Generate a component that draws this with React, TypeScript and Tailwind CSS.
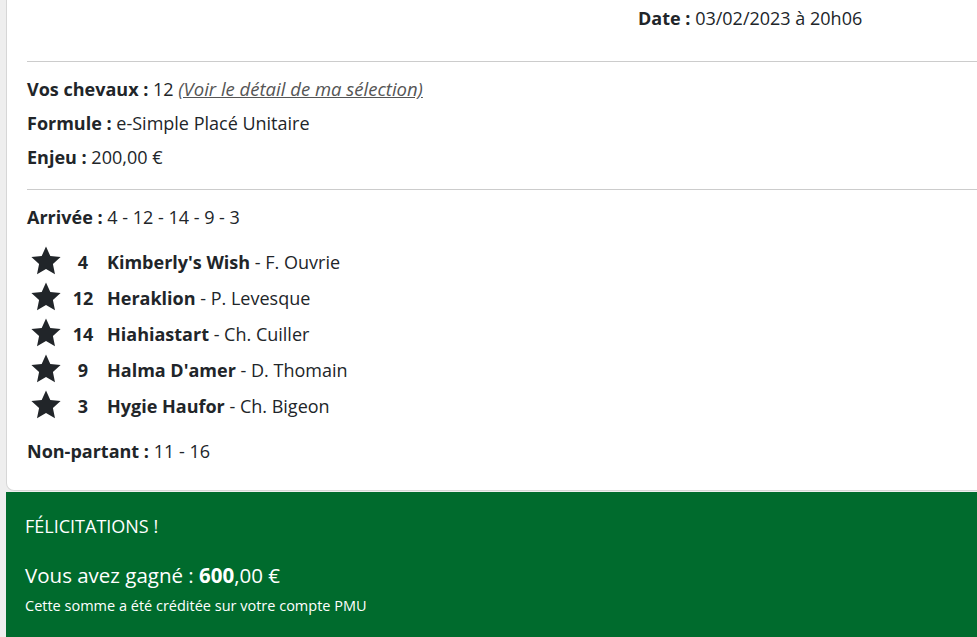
import React from "react";

const horses = [
  { n: "4", name: "Kimberly's Wish", jockey: "F. Ouvrie" },
  { n: "12", name: "Heraklion", jockey: "P. Levesque" },
  { n: "14", name: "Hiahiastart", jockey: "Ch. Cuiller" },
  { n: "9", name: "Halma D'amer", jockey: "D. Thomain" },
  { n: "3", name: "Hygie Haufor", jockey: "Ch. Bigeon" },
];

function Star() {
  return (
    <svg width="30" height="29" viewBox="0.5 0.5 23 22" className="block">
      <path
        d="M12 0.8l3.3 7.2 7.9 0.9-5.9 5.3 1.6 7.8L12 18l-6.9 4 1.6-7.8L0.8 8.9l7.9-0.9z"
        fill="#212529"
      />
    </svg>
  );
}

export default function App() {
  return (
    <div
      className="w-[977px] h-[637px] overflow-hidden bg-[#eeeeee] pl-[6px] text-[#212529]"
      style={{ fontFamily: "'Open Sans', 'Noto Sans', sans-serif" }}
    >
      <div className="w-[1100px] bg-white border border-[#d6d6d6] border-t-0 rounded-bl-[8px] px-5 text-[18px] leading-[24px]">
        <div className="grid grid-cols-[611px_1fr] pt-[6px] h-[61px]">
          <div />
          <div>
            <span className="font-bold">Date :</span> 03/02/2023 à 20h06
          </div>
        </div>
        <div className="border-t border-[#cccccc]" />
        <div className="pt-[15px] pb-[20px] flex flex-col gap-[10px]">
          <div>
            <span className="font-bold">Vos chevaux :</span> 12{" "}
            <span className="italic underline text-[#555] text-[18.5px]">(Voir le détail de ma sélection)</span>
          </div>
          <div>
            <span className="font-bold">Formule :</span> e-Simple Placé Unitaire
          </div>
          <div>
            <span className="font-bold">Enjeu :</span> 200,00 €
          </div>
        </div>
        <div className="border-t border-[#cccccc]" />
        <div className="pt-[15px]">
          <span className="font-bold">Arrivée :</span> 4 - 12 - 14 - 9 - 3
        </div>
        <div className="mt-[15px] flex flex-col">
          {horses.map((h) => (
            <div key={h.n} className="flex items-center h-[36px]">
              <div className="w-[33px] pl-[4px] -mt-[3px]">
                <Star />
              </div>
              <div className="w-[46px] text-center font-bold">{h.n}</div>
              <div className="pl-[1px]">
                <span className="font-bold">{h.name}</span> - {h.jockey}
              </div>
            </div>
          ))}
        </div>
        <div className="pt-[15px] pb-[27px]">
          <span className="font-bold">Non-partant :</span> 11 - 16
        </div>
      </div>
      <div className="mt-px bg-[#006b2d] text-white px-[19px] pt-[22px] h-[150px]">
        <div className="text-[18px] leading-[24px]">FÉLICITATIONS !</div>
        <div className="mt-[22px] text-[20.5px] leading-[30px]">
          Vous avez gagné : <span className="font-bold">600</span>,00 €
        </div>
        <div className="mt-[7px] text-[14.5px] leading-[18px]">Cette somme a été créditée sur votre compte PMU</div>
      </div>
    </div>
  );
}
